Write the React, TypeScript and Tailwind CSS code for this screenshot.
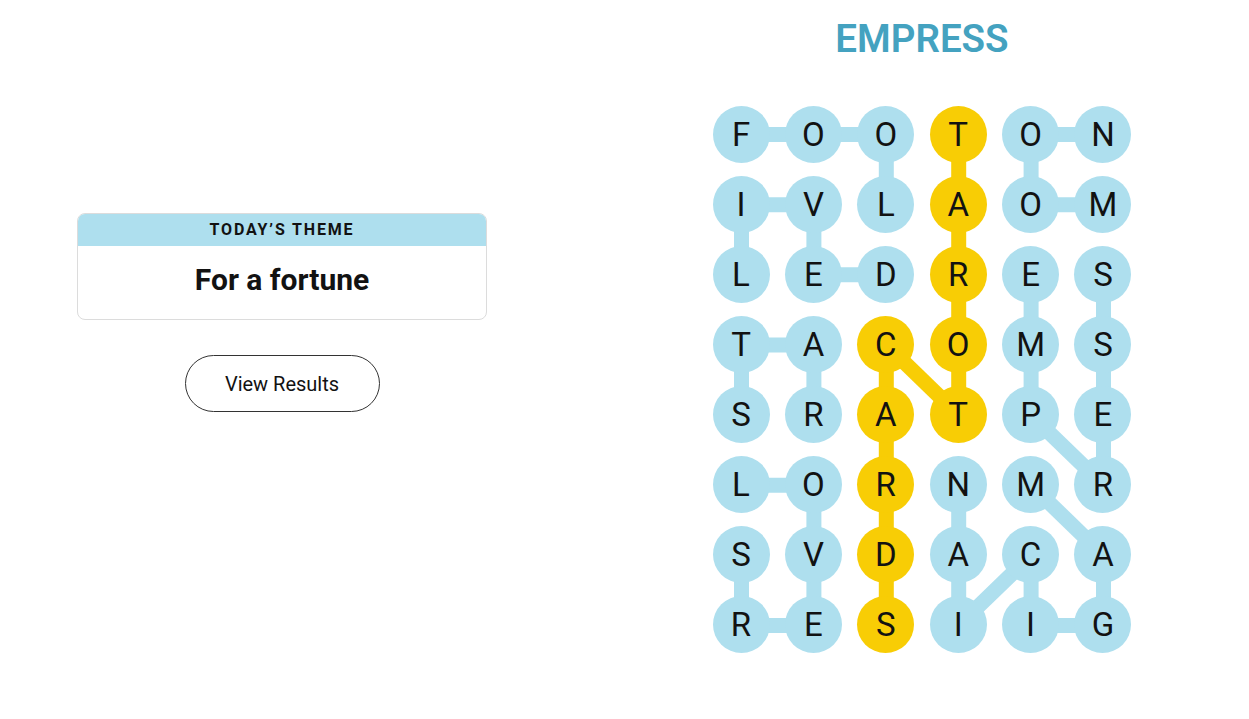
import React from "react";

const LETTERS = [
  "FOOTON",
  "IVLAOM",
  "LEDRES",
  "TACOMS",
  "SRATPE",
  "LORNMR",
  "SVDACA",
  "RESIIG",
];

const YELLOW = new Set([
  "0,3", "1,3", "2,3", "3,3", "4,3", "3,2", "4,2", "5,2", "6,2", "7,2",
]);

type E = [number, number, number, number];

const BLUE_EDGES: E[] = [
  [0, 0, 0, 1], [0, 1, 0, 2], [0, 2, 1, 2],
  [2, 2, 2, 1], [2, 1, 1, 1], [1, 1, 1, 0], [1, 0, 2, 0],
  [1, 5, 1, 4], [1, 4, 0, 4], [0, 4, 0, 5],
  [2, 4, 3, 4], [3, 4, 4, 4], [4, 4, 5, 5], [5, 5, 4, 5], [4, 5, 3, 5], [3, 5, 2, 5],
  [4, 0, 3, 0], [3, 0, 3, 1], [3, 1, 4, 1],
  [5, 0, 5, 1], [5, 1, 6, 1], [6, 1, 7, 1], [7, 1, 7, 0], [7, 0, 6, 0],
  [5, 4, 6, 5], [6, 5, 7, 5], [7, 5, 7, 4], [7, 4, 6, 4], [6, 4, 7, 3], [7, 3, 6, 3], [6, 3, 5, 3],
];

const YELLOW_EDGES: E[] = [
  [0, 3, 1, 3], [1, 3, 2, 3], [2, 3, 3, 3], [3, 3, 4, 3], [4, 3, 3, 2],
  [3, 2, 4, 2], [4, 2, 5, 2], [5, 2, 6, 2], [6, 2, 7, 2],
];

const D = 57;
const PX = 72.4;
const PY = 70.14;
const W = 5 * PX + D;
const H = 7 * PY + D;

const cx = (c: number) => D / 2 + c * PX;
const cy = (r: number) => D / 2 + r * PY;

function Board() {
  return (
    <div className="relative">
      <svg
        className="absolute left-0 top-0"
        width={W}
        height={H}
        viewBox={`0 0 ${W} ${H}`}
      >
        {BLUE_EDGES.map(([r1, c1, r2, c2], i) => (
          <line
            key={"b" + i}
            x1={cx(c1)}
            y1={cy(r1)}
            x2={cx(c2)}
            y2={cy(r2)}
            stroke="#aedfee"
            strokeWidth={15}
          />
        ))}
        {YELLOW_EDGES.map(([r1, c1, r2, c2], i) => (
          <line
            key={"y" + i}
            x1={cx(c1)}
            y1={cy(r1)}
            x2={cx(c2)}
            y2={cy(r2)}
            stroke="#f8cd05"
            strokeWidth={15}
          />
        ))}
      </svg>
      <div className="relative grid grid-cols-[repeat(6,57px)] gap-x-[15.4px] gap-y-[13.14px]">
        {LETTERS.map((row, r) =>
          row.split("").map((ch, c) => (
            <div
              key={r + "-" + c}
              className={
                "flex h-[57px] w-[57px] items-center justify-center rounded-full text-[33px] leading-none text-[#121212] " +
                (YELLOW.has(r + "," + c) ? "bg-[#f8cd05]" : "bg-[#aedfee]")
              }
            >
              {ch}
            </div>
          ))
        )}
      </div>
    </div>
  );
}

export default function App() {
  return (
    <div className="flex h-[719px] w-full bg-white font-['Roboto',sans-serif] text-[#121212]">
      <div className="ml-[77px] mt-[213px] flex w-[410px] flex-col items-center">
        <div className="w-full overflow-hidden rounded-[8px] border border-[#dcdcdc]">
          <div className="flex h-[32px] items-center justify-center bg-[#aedfee] text-[16px] font-bold leading-none tracking-[1.85px]">
            TODAY’S THEME
          </div>
          <div className="flex h-[73px] justify-center pt-[19px] text-[30px] font-bold leading-none">
            For a fortune
          </div>
        </div>
        <button className="mt-[35px] flex h-[57px] w-[195px] items-center justify-center rounded-full border border-[#333333] bg-white text-[20px] leading-none text-[#121212]">
          View Results
        </button>
      </div>
      <div className="ml-[225.5px] flex flex-col items-center pt-[20px]">
        <div className="text-[38.5px] font-semibold leading-none text-[#44a2c0]">
          EMPRESS
        </div>
        <div className="mt-[47px]">
          <Board />
        </div>
      </div>
    </div>
  );
}
